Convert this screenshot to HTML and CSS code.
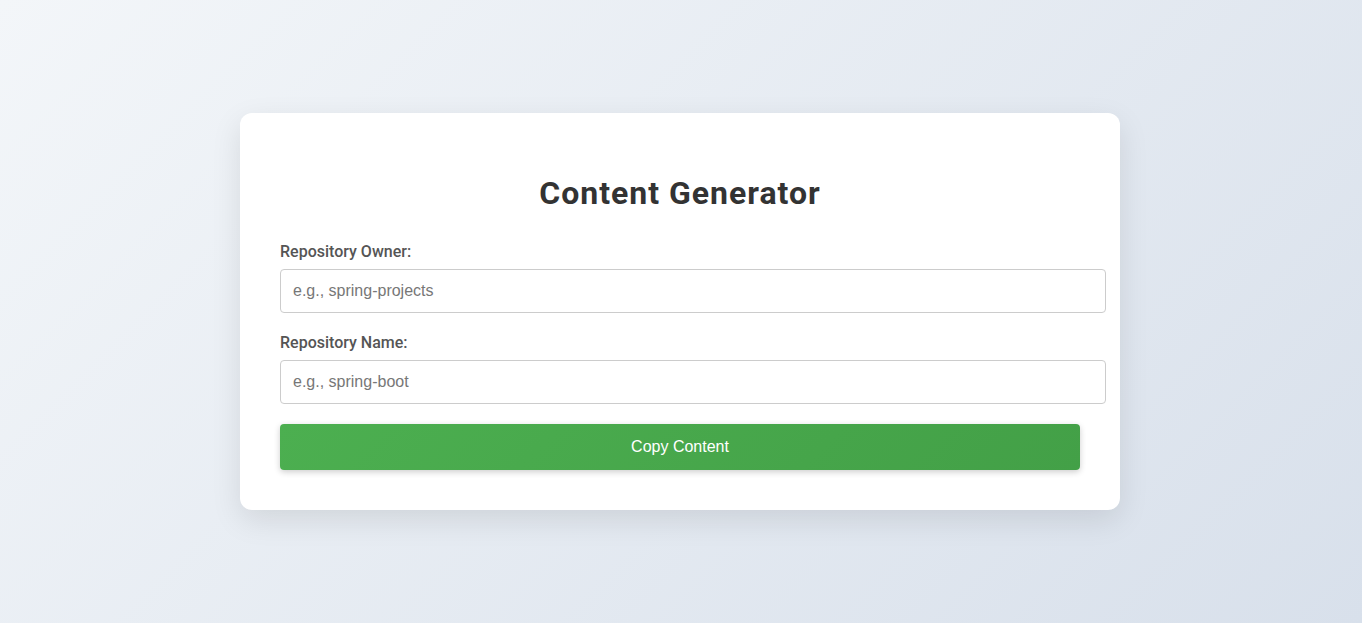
FILE: index.html
```html
<!DOCTYPE html>
<html lang="en">
<head>
<meta charset="utf-8">
<title>Content Generator</title>
<link rel="stylesheet" href="styles.css">
</head>
<body>
<div class="card">
  <h1 class="title">Content Generator</h1>
  <div class="form-group">
    <label class="label" for="owner">Repository Owner:</label>
    <input class="input" id="owner" type="text" placeholder="e.g., spring-projects">
  </div>
  <div class="form-group">
    <label class="label" for="name">Repository Name:</label>
    <input class="input" id="name" type="text" placeholder="e.g., spring-boot">
  </div>
  <button class="btn" type="button">Copy Content</button>
</div>
</body>
</html>
```
FILE: styles.css
```css
html, body {
  height: 100%;
}
body {
  margin: 0;
  font-family: Roboto, "Liberation Sans", Arial, sans-serif;
  background: linear-gradient(135deg, #f3f6f9 0%, #d8e0eb 100%);
  display: flex;
  align-items: center;
  justify-content: center;
}
.card {
  background: #fff;
  width: 800px;
  padding: 40px;
  margin-right: 2px;
  border-radius: 12px;
  box-shadow: 0 10px 30px rgba(0, 0, 0, 0.1);
}
.title {
  margin: 21px 0 30px;
  text-align: center;
  font-size: 32px;
  font-weight: 700;
  color: #333;
  letter-spacing: 1px;
}
.form-group {
  margin-bottom: 20px;
}
.label {
  display: block;
  margin-bottom: 8px;
  font-size: 16px;
  font-weight: 500;
  color: #555;
}
.input {
  display: block;
  width: 100%;
  padding: 12px;
  border: 1px solid #ccc;
  border-radius: 4px;
  font-family: "Liberation Sans", Arial, sans-serif;
  font-size: 16px;
  color: #333;
  background: #fff;
}
.input::placeholder {
  color: #777;
}
.btn {
  display: block;
  width: 100%;
  padding: 14px;
  border: none;
  border-radius: 4px;
  background: linear-gradient(135deg, #4caf50 0%, #43a047 100%);
  color: #fff;
  font-family: "Liberation Sans", Arial, sans-serif;
  font-size: 16px;
  box-shadow: 0 2px 6px rgba(0, 0, 0, 0.2);
  cursor: pointer;
}
```
